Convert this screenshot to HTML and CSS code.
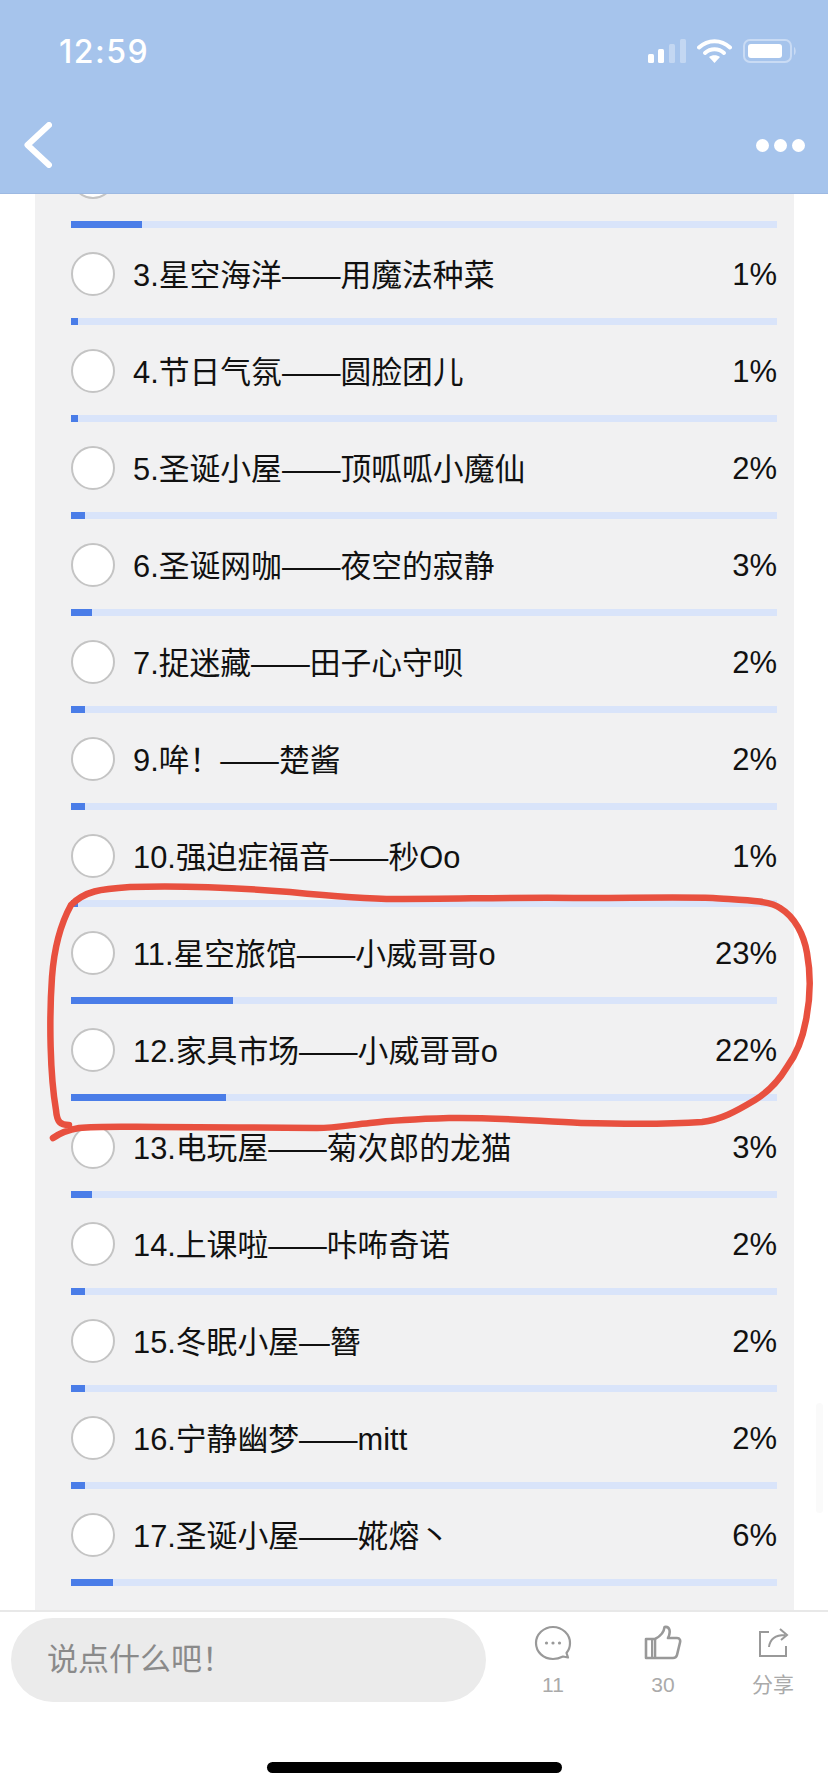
FILE: index.html
```html
<!DOCTYPE html>
<html lang="zh-CN">
<head>
  <meta charset="UTF-8" />
  <meta name="viewport" content="width=device-width, initial-scale=1.0"/>
  <title>投票</title>
  <link rel="stylesheet" href="styles.css">
</head>
<body>
  <div class="page">
    <header class="top">
      <div class="status">
        <span class="time">12:59</span>
        <div class="status-icons">
          <svg class="signal" width="38" height="24" viewBox="0 0 38 24">
            <rect x="0" y="15" width="6" height="9" rx="1.5" fill="#fff"/>
            <rect x="10" y="10" width="6" height="14" rx="1.5" fill="#fff"/>
            <rect x="21" y="5" width="6" height="19" rx="1.5" fill="#c3d7f2"/>
            <rect x="32" y="0" width="6" height="24" rx="1.5" fill="#c3d7f2"/>
          </svg>
          <svg class="wifi" width="35" height="24" viewBox="0 0 35 24">
            <path d="M2 8.5 C11 0 24 0 33 8.5" fill="none" stroke="#fff" stroke-width="4" stroke-linecap="round"/>
            <path d="M8 14 C13.5 9 21.5 9 27 14" fill="none" stroke="#fff" stroke-width="4" stroke-linecap="round"/>
            <path d="M17.5 24 L12 18 C15 15.5 20 15.5 23 18 Z" fill="#fff"/>
          </svg>
          <svg class="battery" width="54" height="24" viewBox="0 0 54 24">
            <rect x="1" y="1" width="47" height="22" rx="6" fill="none" stroke="#c9dbf4" stroke-width="2"/>
            <rect x="5" y="5" width="34" height="14" rx="3" fill="#fff"/>
            <path d="M51 8 C53 9 53.5 15 51 16 Z" fill="#c9dbf4"/>
          </svg>
        </div>
      </div>
      <nav class="nav">
        <svg class="back" width="28" height="46" viewBox="0 0 28 46">
          <path d="M25 3 L3.5 23 L25 43" fill="none" stroke="#fff" stroke-width="6" stroke-linecap="round" stroke-linejoin="round"/>
        </svg>
        <div class="more"><i></i><i></i><i></i></div>
      </nav>
    </header>

    <main class="scroller">
      <div class="poll">
        <div class="option">
          <div class="option-head"><span class="radio"></span><span class="name"></span></div>
          <div class="bar"><div class="fill" style="width: 10%"></div></div>
        </div>
        <div class="option">
          <div class="option-head"><span class="radio"></span><span class="name">3.星空海洋<span class="dash">——</span>用魔法种菜</span><span class="pct">1%</span></div>
          <div class="bar"><div class="fill" style="width: 1%"></div></div>
        </div>
        <div class="option">
          <div class="option-head"><span class="radio"></span><span class="name">4.节日气氛<span class="dash">——</span>圆脸团儿</span><span class="pct">1%</span></div>
          <div class="bar"><div class="fill" style="width: 1%"></div></div>
        </div>
        <div class="option">
          <div class="option-head"><span class="radio"></span><span class="name">5.圣诞小屋<span class="dash">——</span>顶呱呱小魔仙</span><span class="pct">2%</span></div>
          <div class="bar"><div class="fill" style="width: 2%"></div></div>
        </div>
        <div class="option">
          <div class="option-head"><span class="radio"></span><span class="name">6.圣诞网咖<span class="dash">——</span>夜空的寂静</span><span class="pct">3%</span></div>
          <div class="bar"><div class="fill" style="width: 3%"></div></div>
        </div>
        <div class="option">
          <div class="option-head"><span class="radio"></span><span class="name">7.捉迷藏<span class="dash">——</span>田子心守呗</span><span class="pct">2%</span></div>
          <div class="bar"><div class="fill" style="width: 2%"></div></div>
        </div>
        <div class="option">
          <div class="option-head"><span class="radio"></span><span class="name">9.哞！<span class="dash">——</span>楚酱</span><span class="pct">2%</span></div>
          <div class="bar"><div class="fill" style="width: 2%"></div></div>
        </div>
        <div class="option">
          <div class="option-head"><span class="radio"></span><span class="name">10.强迫症福音<span class="dash">——</span>秒Oo</span><span class="pct">1%</span></div>
          <div class="bar"><div class="fill" style="width: 1%"></div></div>
        </div>
        <div class="option">
          <div class="option-head"><span class="radio"></span><span class="name">11.星空旅馆<span class="dash">——</span>小威哥哥o</span><span class="pct">23%</span></div>
          <div class="bar"><div class="fill" style="width: 23%"></div></div>
        </div>
        <div class="option">
          <div class="option-head"><span class="radio"></span><span class="name">12.家具市场<span class="dash">——</span>小威哥哥o</span><span class="pct">22%</span></div>
          <div class="bar"><div class="fill" style="width: 22%"></div></div>
        </div>
        <div class="option">
          <div class="option-head"><span class="radio"></span><span class="name">13.电玩屋<span class="dash">——</span>菊次郎的龙猫</span><span class="pct">3%</span></div>
          <div class="bar"><div class="fill" style="width: 3%"></div></div>
        </div>
        <div class="option">
          <div class="option-head"><span class="radio"></span><span class="name">14.上课啦<span class="dash">——</span>咔咘奇诺</span><span class="pct">2%</span></div>
          <div class="bar"><div class="fill" style="width: 2%"></div></div>
        </div>
        <div class="option">
          <div class="option-head"><span class="radio"></span><span class="name">15.冬眠小屋<span class="dash">—</span>簪</span><span class="pct">2%</span></div>
          <div class="bar"><div class="fill" style="width: 2%"></div></div>
        </div>
        <div class="option">
          <div class="option-head"><span class="radio"></span><span class="name">16.宁静幽梦<span class="dash">——</span>mitt</span><span class="pct">2%</span></div>
          <div class="bar"><div class="fill" style="width: 2%"></div></div>
        </div>
        <div class="option">
          <div class="option-head"><span class="radio"></span><span class="name">17.圣诞小屋<span class="dash">——</span>婲熔丶</span><span class="pct">6%</span></div>
          <div class="bar"><div class="fill" style="width: 6%"></div></div>
        </div>
      </div>
    </main>

    <footer class="bottom">
      <div class="actions">
        <div class="input">说点什么吧！</div>
        <div class="action-list">
          <div class="action">
            <svg width="38" height="36" viewBox="0 0 38 36">
              <path d="M19 2 C9.5 2 2 9.5 2 18 C2 27 9.5 34 19 34 C23 34 26 33 29 31.5 L34 32.5 L32.5 28 C35 25 36 21.5 36 18 C36 9.5 28.5 2 19 2 Z" fill="none" stroke="#999" stroke-width="2.2" stroke-linejoin="round"/>
              <circle cx="12.5" cy="18" r="1.6" fill="#999"/>
              <circle cx="19" cy="18" r="1.6" fill="#999"/>
              <circle cx="25.5" cy="18" r="1.6" fill="#999"/>
            </svg>
            <span>11</span>
          </div>
          <div class="action">
            <svg width="38" height="36" viewBox="0 0 38 36">
              <path d="M2 14 H11 V33 H2 Z M11 14 C17 11 20 8 20.5 2 C26 1 27 7 24 13 H33 C36 13 36.5 15.5 36 17.5 L33 30 C32.5 32 31 33 29 33 H11" fill="none" stroke="#999" stroke-width="2.6" stroke-linejoin="round"/>
              <path d="M8 14 V33" stroke="#999" stroke-width="2"/>
            </svg>
            <span>30</span>
          </div>
          <div class="action">
            <svg width="38" height="36" viewBox="0 0 38 36">
              <path d="M15 7 H6 V31 H32 V21" fill="none" stroke="#999" stroke-width="2"/>
              <path d="M15 22 C16 14 22 10 31 10 M26 4 L33 10 L27 15" fill="none" stroke="#999" stroke-width="2"/>
            </svg>
            <span>分享</span>
          </div>
        </div>
      </div>
      <div class="home-bar"></div>
    </footer>

    <!-- page scrollbar, barely visible -->
    <div class="scrollbar"></div>

    <!-- hand drawn red circle on top of the screenshot -->
    <svg class="scribble" width="828" height="280" viewBox="0 880 828 280">
      <path d="M69 1125 C60 1125 57 1122 56 1110 C50 1075 49 1020 52 977 C54 950 60 925 71 905 C85 891 100 889 130 887 C185 885 240 888 290 892 C330 896 365 899 396 899 C460 899 520 897 581 898 C630 898 680 897 713 898 C740 900 770 900 780 908 C795 917 804 935 807 953 C811 975 810 1000 806 1020 C802 1042 796 1055 787 1067 C778 1082 768 1092 755 1100 C735 1112 720 1120 702 1122 C660 1125 620 1124 581 1123 C535 1121 490 1117 449 1118 C415 1119 395 1120 370 1123 C350 1125 335 1128 317 1128 C265 1128 210 1127 158 1127 C130 1127 100 1126 79 1128 C67 1130 60 1133 53 1138" fill="none" stroke="#e8503f" stroke-width="6.5" stroke-linecap="round" stroke-linejoin="round"/>
    </svg>
  </div>
</body>
</html>
```

FILE: styles.css
```css
* {
  box-sizing: border-box;
}
body {
  margin: 0;
  background: #fff;
  font-family: "Liberation Sans", "Noto Sans CJK SC", sans-serif;
}
.page {
  position: relative;
  display: flex;
  flex-direction: column;
  width: 828px;
  height: 1792px;
  overflow: hidden;
}

/* header */
.top {
  flex: none;
  height: 194px;
  padding-top: 39px;
  background: #a6c4ec;
  border-bottom: 1px solid #9db9e2;
}
.status {
  display: flex;
  justify-content: space-between;
  align-items: center;
  height: 24px;
  padding: 0 31px 0 59px;
}
.time {
  color: #fff;
  font-family: Inter, "Liberation Sans", sans-serif;
  font-size: 32px;
  font-weight: 500;
  letter-spacing: 1.5px;
}
.status-icons {
  display: flex;
  align-items: center;
  gap: 11px;
}
.status-icons svg {
  display: block;
}
.nav {
  display: flex;
  justify-content: space-between;
  align-items: center;
  height: 46px;
  margin-top: 59px;
  padding: 0 23px 0 24px;
}
.back {
  display: block;
}
.more {
  display: flex;
  gap: 5px;
}
.more i {
  width: 13px;
  height: 13px;
  border-radius: 50%;
  background: #fff;
}

/* poll list, scrolled to the bottom */
.scroller {
  flex: 1;
  display: flex;
  flex-direction: column;
  justify-content: flex-end;
  min-height: 0;
  overflow: hidden;
}
.poll {
  flex: none;
  width: 759px;
  margin-left: 35px;
  padding: 0 17px 24px 36px;
  background: #f1f1f2;
}
.option {
  height: 97px;
  padding-top: 24px;
}
.option-head {
  display: flex;
  align-items: center;
  height: 44px;
}
.radio {
  flex: none;
  width: 44px;
  height: 44px;
  border: 2px solid #c4c4c4;
  border-radius: 50%;
  background: #fff;
}
.name {
  flex: 1;
  margin-left: 18px;
  padding-bottom: 4px;
  color: #111;
  font-size: 30.8px;
  white-space: nowrap;
}
.dash {
  letter-spacing: -3px;
  margin-right: 3px;
}
.pct {
  padding-top: 1px;
  color: #111;
  font-size: 31px;
}
.bar {
  height: 7px;
  margin-top: 22px;
  background: #d9e4fa;
}
.fill {
  height: 100%;
  background: #4a7de8;
}

/* footer */
.bottom {
  flex: none;
  height: 182px;
  background: #fff;
  border-top: 2px solid #e8e8e8;
}
.actions {
  display: flex;
  align-items: flex-start;
  padding: 6px 0 0 11px;
}
.input {
  flex: none;
  width: 475px;
  height: 84px;
  padding-left: 36px;
  border-radius: 42px;
  background: #ebebeb;
  color: #8a8a8a;
  font-size: 31px;
  line-height: 84px;
}
.action-list {
  display: flex;
  padding-left: 12px;
}
.action {
  display: flex;
  flex-direction: column;
  align-items: center;
  width: 110px;
  color: #aaa;
  font-size: 21px;
}
.action svg {
  display: block;
  margin-top: 7px;
}
.action span {
  margin-top: 12px;
  line-height: 24px;
}
.home-bar {
  width: 295px;
  height: 11px;
  margin: 60px 0 0 267px;
  border-radius: 6px;
  background: #000;
}

.scrollbar {
  position: absolute;
  left: 816px;
  top: 1403px;
  width: 7px;
  height: 110px;
  border-radius: 4px;
  background: #fafafa;
}
.scribble {
  position: absolute;
  left: 0;
  top: 880px;
}
```
